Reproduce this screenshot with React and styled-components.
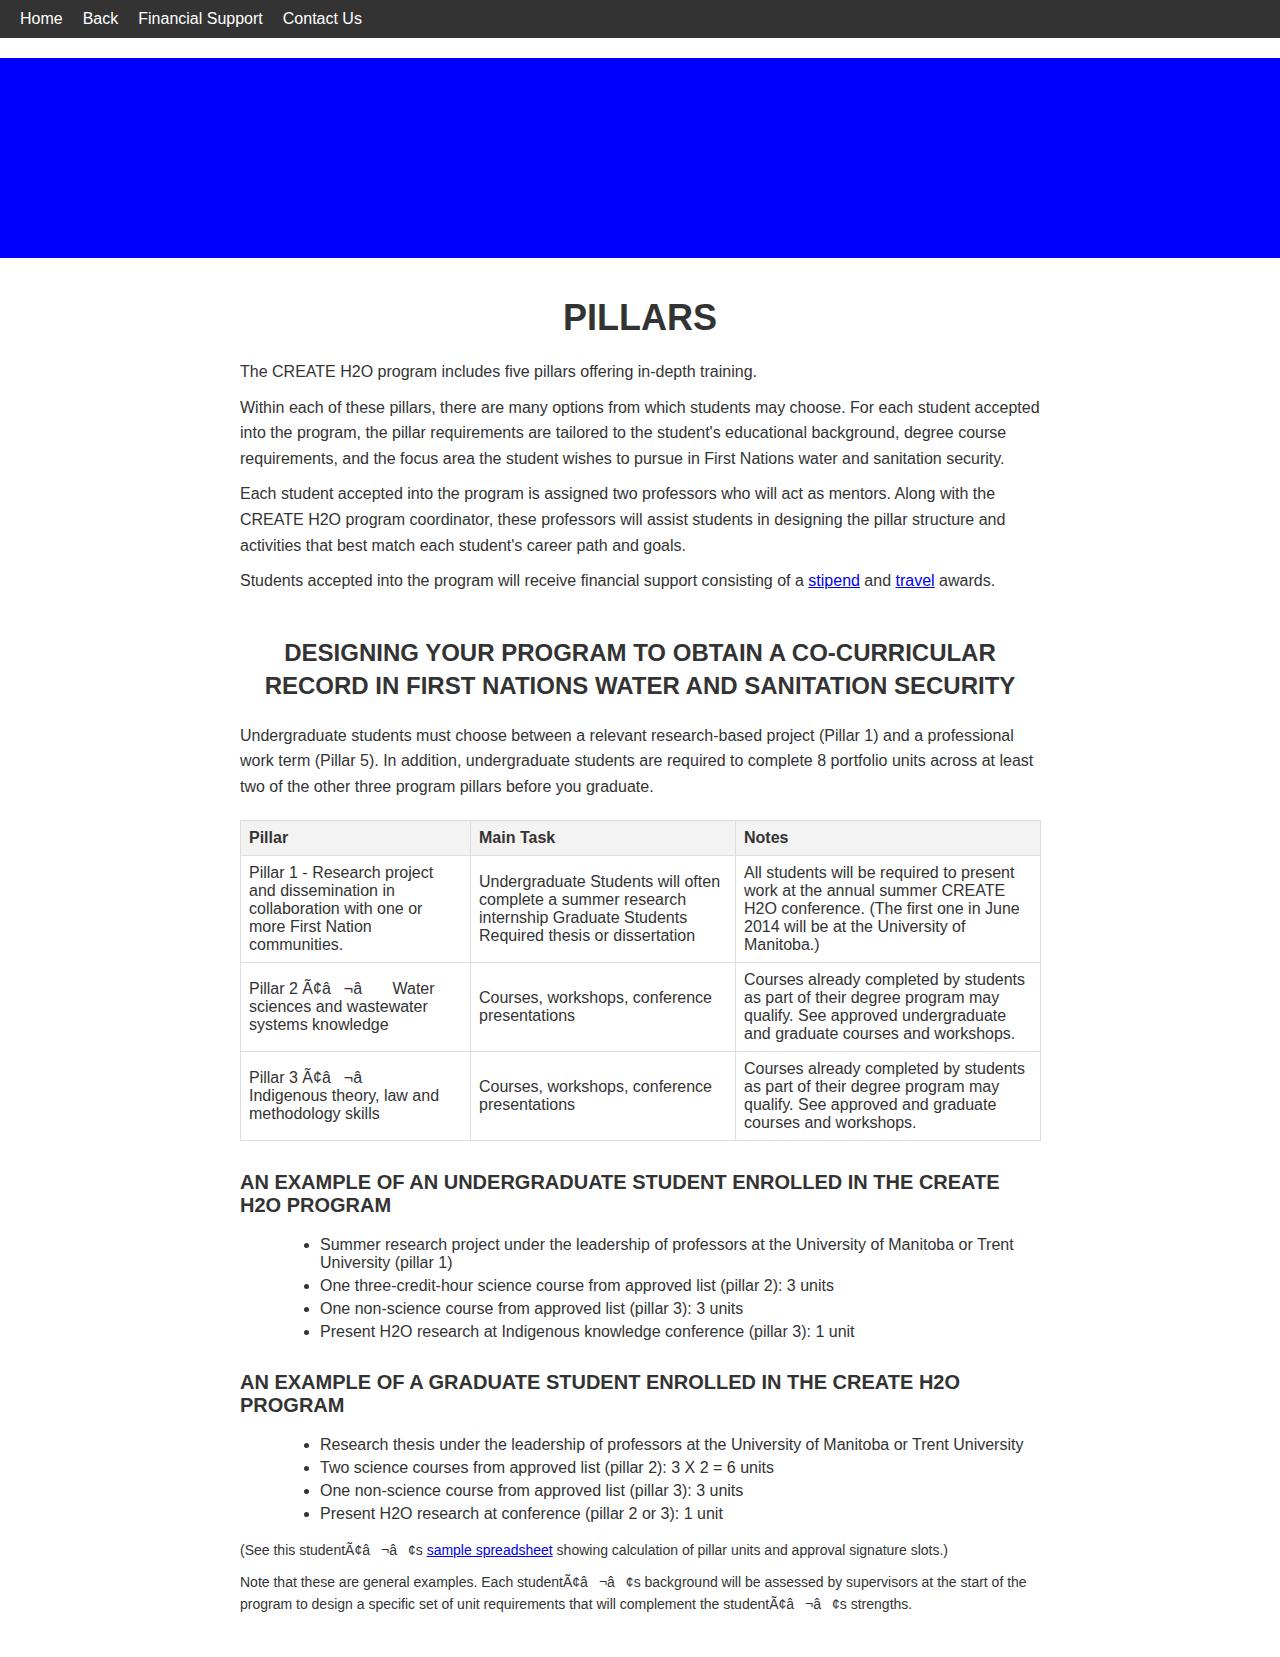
import React from "react";
import styled, { createGlobalStyle } from "styled-components";

const GlobalStyle = createGlobalStyle`
  body {
    margin: 0;
    background: #fff;
    color: #333;
    font-family: "Liberation Sans", Arial, sans-serif;
    font-size: 16px;
  }
  a {
    color: #0000ee;
  }
`;

const NavBar = styled.nav`
  display: flex;
  align-items: center;
  height: 38px;
  padding: 0 10px;
  background-color: #333;
`;

const NavLink = styled.a`
  padding: 0 10px;
  color: #fff;
  text-decoration: none;
  font-size: 16px;
`;

const Banner = styled.div`
  margin-top: 20px;
  height: 200px;
  background-color: #0000ff;
`;

const Main = styled.main`
  width: 800px;
  margin: 0 auto;
  padding: 39px 0 40px;
`;

const Title = styled.h1`
  margin: 0 0 21px;
  font-size: 36px;
  line-height: 41px;
  text-align: center;
  font-weight: bold;
`;

const SubTitle = styled.h2`
  margin: 42px 0 21px;
  font-size: 24px;
  line-height: 33px;
  text-align: center;
  font-weight: bold;
`;

const Section = styled.h3`
  margin: 30px 0 19px;
  font-size: 20px;
  line-height: 23px;
  font-weight: bold;
`;

const Para = styled.p`
  margin: 10px 0;
  font-size: ${({ small }) => (small ? "14px" : "16px")};
  line-height: 1.6;
`;

const Table = styled.table`
  width: 800px;
  margin-top: 20px;
  border-collapse: collapse;
  table-layout: fixed;
`;

const HeadCell = styled.th`
  width: ${({ w }) => w - 17}px;
  padding: 8px;
  background-color: #f3f3f3;
  border: 1px solid #ddd;
  text-align: left;
  font-weight: bold;
  line-height: 18px;
`;

const Cell = styled.td`
  padding: 8px;
  border: 1px solid #ddd;
  vertical-align: middle;
  line-height: 18px;
`;

const List = styled.ul`
  margin: 0;
  padding-left: 80px;
`;

const Item = styled.li`
  margin-bottom: 5px;
  line-height: 18px;
`;

const dash = "Ã¢â\u0082¬â\u0080\u009C";
const apos = "Ã¢â\u0082¬â\u0084¢";

const rows = [
  [
    "Pillar 1 - Research project and dissemination in collaboration with one or more First Nation communities.",
    "Undergraduate Students will often complete a summer research internship Graduate Students Required thesis or dissertation",
    "All students will be required to present work at the annual summer CREATE H2O conference. (The first one in June 2014 will be at the University of Manitoba.)",
  ],
  [
    `Pillar 2 ${dash} Water sciences and wastewater systems knowledge`,
    "Courses, workshops, conference presentations",
    "Courses already completed by students as part of their degree program may qualify. See approved undergraduate and graduate courses and workshops.",
  ],
  [
    `Pillar 3 ${dash} Indigenous theory, law and methodology skills`,
    "Courses, workshops, conference presentations",
    "Courses already completed by students as part of their degree program may qualify. See approved and graduate courses and workshops.",
  ],
];

const undergrad = [
  "Summer research project under the leadership of professors at the University of Manitoba or Trent University (pillar 1)",
  "One three-credit-hour science course from approved list (pillar 2): 3 units",
  "One non-science course from approved list (pillar 3): 3 units",
  "Present H2O research at Indigenous knowledge conference (pillar 3): 1 unit",
];

const grad = [
  "Research thesis under the leadership of professors at the University of Manitoba or Trent University",
  "Two science courses from approved list (pillar 2): 3 X 2 = 6 units",
  "One non-science course from approved list (pillar 3): 3 units",
  "Present H2O research at conference (pillar 2 or 3): 1 unit",
];

export default function App() {
  return (
    <>
      <GlobalStyle />
      <NavBar>
        <NavLink href="#">Home</NavLink>
        <NavLink href="#">Back</NavLink>
        <NavLink href="#">Financial Support</NavLink>
        <NavLink href="#">Contact Us</NavLink>
      </NavBar>
      <Banner />
      <Main>
        <Title>PILLARS</Title>
        <Para>The CREATE H2O program includes five pillars offering in-depth training.</Para>
        <Para>
          Within each of these pillars, there are many options from which students may choose. For each
          student accepted into the program, the pillar requirements are tailored to the student's
          educational background, degree course requirements, and the focus area the student wishes to
          pursue in First Nations water and sanitation security.
        </Para>
        <Para>
          Each student accepted into the program is assigned two professors who will act as mentors. Along
          with the CREATE H2O program coordinator, these professors will assist students in designing the
          pillar structure and activities that best match each student's career path and goals.
        </Para>
        <Para>
          Students accepted into the program will receive financial support consisting of a{" "}
          <a href="#">stipend</a> and <a href="#">travel</a> awards.
        </Para>

        <SubTitle>
          DESIGNING YOUR PROGRAM TO OBTAIN A CO-CURRICULAR RECORD IN FIRST NATIONS WATER AND SANITATION
          SECURITY
        </SubTitle>
        <Para>
          Undergraduate students must choose between a relevant research-based project (Pillar 1) and a
          professional work term (Pillar 5). In addition, undergraduate students are required to complete 8
          portfolio units across at least two of the other three program pillars before you graduate.
        </Para>

        <Table>
          <thead>
            <tr>
              <HeadCell w={230}>Pillar</HeadCell>
              <HeadCell w={265}>Main Task</HeadCell>
              <HeadCell w={305}>Notes</HeadCell>
            </tr>
          </thead>
          <tbody>
            {rows.map((r, i) => (
              <tr key={i}>
                {r.map((c, j) => (
                  <Cell key={j}>{c}</Cell>
                ))}
              </tr>
            ))}
          </tbody>
        </Table>

        <Section>AN EXAMPLE OF AN UNDERGRADUATE STUDENT ENROLLED IN THE CREATE H2O PROGRAM</Section>
        <List>
          {undergrad.map((t, i) => (
            <Item key={i}>{t}</Item>
          ))}
        </List>

        <Section>AN EXAMPLE OF A GRADUATE STUDENT ENROLLED IN THE CREATE H2O PROGRAM</Section>
        <List>
          {grad.map((t, i) => (
            <Item key={i}>{t}</Item>
          ))}
        </List>

        <Para small style={{ marginTop: 16 }}>
          (See this student{apos}s <a href="#">sample spreadsheet</a> showing calculation of pillar units and
          approval signature slots.)
        </Para>
        <Para small>
          Note that these are general examples. Each student{apos}s background will be assessed by
          supervisors at the start of the program to design a specific set of unit requirements that will
          complement the student{apos}s strengths.
        </Para>
      </Main>
    </>
  );
}
